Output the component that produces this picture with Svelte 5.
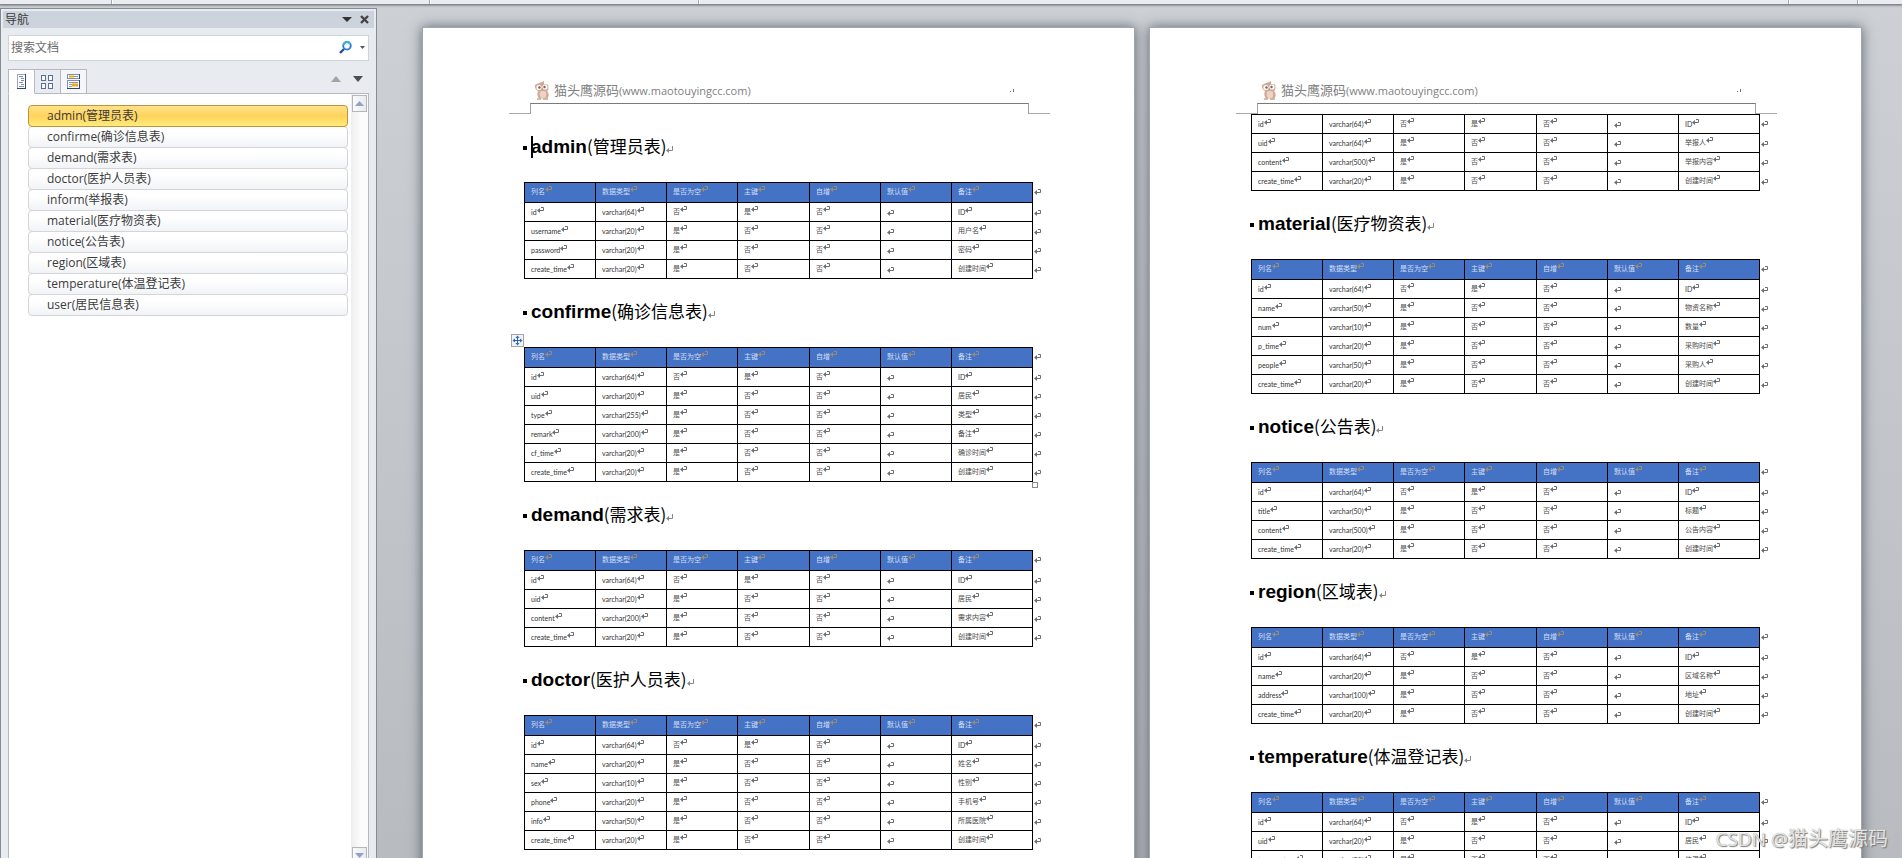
<script>
  const navItems = [
    'admin(管理员表)',
    'confirme(确诊信息表)',
    'demand(需求表)',
    'doctor(医护人员表)',
    'inform(举报表)',
    'material(医疗物资表)',
    'notice(公告表)',
    'region(区域表)',
    'temperature(体温登记表)',
    'user(居民信息表)'
  ];
  let selected = $state(0);
  let view = $state(0);
  let query = $state('');

  const columns = ['列名', '数据类型', '是否为空', '主键', '自增', '默认值', '备注'];

  // [name, length, remark]; the id column is always the primary key
  const pages = [
    [
      { name: 'admin', title: '管理员表', caret: true, rows: [['id', 64, 'ID'], ['username', 20, '用户名'], ['password', 20, '密码'], ['create_time', 20, '创建时间']] },
      { name: 'confirme', title: '确诊信息表', handles: true, rows: [['id', 64, 'ID'], ['uid', 20, '居民'], ['type', 255, '类型'], ['remark', 200, '备注'], ['cf_time', 20, '确诊时间'], ['create_time', 20, '创建时间']] },
      { name: 'demand', title: '需求表', rows: [['id', 64, 'ID'], ['uid', 20, '居民'], ['content', 200, '需求内容'], ['create_time', 20, '创建时间']] },
      { name: 'doctor', title: '医护人员表', rows: [['id', 64, 'ID'], ['name', 20, '姓名'], ['sex', 10, '性别'], ['phone', 20, '手机号'], ['info', 50, '所属医院'], ['create_time', 20, '创建时间']] }
    ],
    [
      { rows: [['id', 64, 'ID'], ['uid', 64, '举报人'], ['content', 500, '举报内容'], ['create_time', 20, '创建时间']] },
      { name: 'material', title: '医疗物资表', rows: [['id', 64, 'ID'], ['name', 50, '物资名称'], ['num', 10, '数量'], ['p_time', 20, '采购时间'], ['people', 50, '采购人'], ['create_time', 20, '创建时间']] },
      { name: 'notice', title: '公告表', rows: [['id', 64, 'ID'], ['title', 50, '标题'], ['content', 500, '公告内容'], ['create_time', 20, '创建时间']] },
      { name: 'region', title: '区域表', rows: [['id', 64, 'ID'], ['name', 20, '区域名称'], ['address', 100, '地址'], ['create_time', 20, '创建时间']] },
      { name: 'temperature', title: '体温登记表', rows: [['id', 64, 'ID'], ['uid', 20, '居民'], ['temperature', 20, '体温'], ['create_time', 20, '创建时间']] }
    ]
  ];

  const isLatin = (text) => /^[\x00-\x7f]+$/.test(text);

  function cells([name, length, remark]) {
    const key = name === 'id';
    return [name, `varchar(${length})`, key ? '否' : '是', key ? '是' : '否', '否', '', remark];
  }
</script>

{#snippet mark()}
  <svg class="mark" viewBox="0 0 7 6" width="7" height="6" aria-hidden="true">
    <path d="M4 .5H6.5V3.5H1" fill="none" stroke="currentColor" />
    <path d="M0 3.5L3 1V6Z" fill="currentColor" />
  </svg>
{/snippet}

<div class="app">
  <div class="ribbon" aria-hidden="true">
    <i></i><i></i><i></i><i></i><i></i>
  </div>

  <div class="main">
    <aside class="pane">
      <header class="pane-title">
        <span>导航</span>
        <button aria-label="任务窗格选项">
          <svg width="10" height="5" viewBox="0 0 10 5"><path d="M0 0H10L5 5Z" fill="#333" /></svg>
        </button>
        <button aria-label="关闭">
          <svg width="9" height="9" viewBox="0 0 9 9"><path d="M1 1L8 8M8 1L1 8" stroke="#444" stroke-width="2.4" /></svg>
        </button>
      </header>

      <div class="search">
        <input type="text" aria-label="搜索文档" placeholder="搜索文档" bind:value={query} />
        <button aria-label="搜索">
          <svg width="13" height="13" viewBox="0 0 13 13">
            <path d="M5 8L1 12" stroke="#2a4a9c" stroke-width="2.4" />
            <circle cx="8" cy="4.8" r="3.8" fill="#f2faff" stroke="#2b7cc9" stroke-width="1.8" />
            <path d="M4.3 4.2A3.8 3.8 0 0 1 11.4 3" fill="none" stroke="#3fb0de" stroke-width="1.8" />
          </svg>
        </button>
        <button class="more" aria-label="查找选项">
          <svg width="5" height="3" viewBox="0 0 5 3"><path d="M0 0H5L2.5 3Z" fill="#555" /></svg>
        </button>
      </div>

      <div class="tabs">
        <button class:active={view === 0} aria-label="浏览您的文档中的标题" onclick={() => (view = 0)}>
          <svg width="9" height="15" viewBox="0 0 9 15">
            <rect x=".5" y=".5" width="8" height="14" fill="#fff" stroke="#9aa7ba" />
            <path d="M8.5 0V15M0 14.5H9" stroke="#33476b" />
            <path d="M2 2.5H6M4 4.5H7M4 6.5H7M2 8.5H6M4 10.5H7M2 12.5H7" stroke="#7d8da6" />
          </svg>
        </button>
        <button class:active={view === 1} aria-label="浏览您的文档中的页面" onclick={() => (view = 1)}>
          <svg width="12" height="14" viewBox="0 0 12 14">
            <g fill="#f6f9fd" stroke="#5c6f93">
              <rect x=".5" y=".5" width="4" height="5" /><rect x="7.5" y=".5" width="4" height="5" />
              <rect x=".5" y="8.5" width="4" height="5" /><rect x="7.5" y="8.5" width="4" height="5" />
            </g>
          </svg>
        </button>
        <button class="light" class:active={view === 2} aria-label="浏览当前搜索的结果" onclick={() => (view = 2)}>
          <svg width="13" height="15" viewBox="0 0 13 15">
            <rect x=".5" y=".5" width="12" height="4" fill="#fff" stroke="#7f90ad" />
            <rect x=".5" y="6.5" width="12" height="8" fill="#fff" stroke="#7f90ad" />
            <path d="M12.5 0V5M12.5 6V15M0 14.5H13" stroke="#33476b" />
            <path d="M2 2.5H7M5 10.5H11M5 11.5H11" stroke="#f0a818" stroke-width="2" />
            <path d="M7 2.5H11M2 8.5H11M2 10.5H5M2 12.5H5" stroke="#8796b0" />
          </svg>
        </button>
        <span class="steps">
          <button aria-label="上一标题"><svg width="10" height="6" viewBox="0 0 10 6"><path d="M0 6H10L5 0Z" fill="#a3a3a3" /></svg></button>
          <button aria-label="下一标题"><svg width="10" height="6" viewBox="0 0 10 6"><path d="M0 0H10L5 6Z" fill="#4c4f54" /></svg></button>
        </span>
      </div>

      <div class="outline">
        <ul>
          {#each navItems as item, i}
            <li><button class:selected={selected === i} onclick={() => (selected = i)}>{item}</button></li>
          {/each}
        </ul>
        <div class="scrollbar">
          <button aria-label="向上滚动"><svg width="9" height="5" viewBox="0 0 9 5"><path d="M0 5H9L4.5 0Z" fill="#94a0cc" /></svg></button>
          <button aria-label="向下滚动"><svg width="9" height="5" viewBox="0 0 9 5"><path d="M0 0H9L4.5 5Z" fill="#94a0cc" /></svg></button>
        </div>
      </div>
    </aside>

    <main class="workspace">
      {#each pages as sections}
        <article class="page">
          <header class="page-head">
            <svg class="owl" width="16" height="19" viewBox="0 0 16 19" aria-hidden="true">
              <path d="M1 4L4 2.500L8 1L10 0L10 3L14 3.500C15 7 14.500 9 13 10C15.500 13 15 16 13 17.500H5C3 15 3 12 4 10C1.500 9 .5 6 1 4Z" fill="#d3a994" />
              <path d="M6 10.500C8 9.500 11 10 12 11C12.500 14 12 16 11 17H7C5.500 15 5.500 12 6 10.500Z" fill="#ecd3c5" />
              <circle cx="5" cy="6.500" r="2.600" fill="#fbfaf8" /><circle cx="11" cy="6" r="2.600" fill="#fbfaf8" />
              <circle cx="5.500" cy="6.500" r="1.200" fill="#6e6765" /><circle cx="10.500" cy="6" r="1.200" fill="#6e6765" />
              <path d="M7.500 7.500H9L8.200 9.500Z" fill="#c48d61" />
              <path d="M3 18H7M9 18H14" stroke="#c7a797" stroke-width="1.400" />
            </svg>
            <span class="site">猫头鹰源码<span class="url">(www.maotouyingcc.com)</span></span>
            <svg class="end" width="4" height="3" viewBox="0 0 4 3" aria-hidden="true"><path d="M0 2H1V3H0ZM3 0H4V3H3Z" fill="#777" /></svg>
          </header>
          <div class="margin" aria-hidden="true"><i></i><b></b><i></i></div>

          <div class="body">
            {#each sections as section}
              {#if section.name}
                <h2>
                  <span class="bullet"></span>
                  <strong>{#if section.caret}<span class="caret"></span>{/if}{section.name}</strong><span class="cn">({section.title})</span>
                  <svg class="para" width="7" height="7" viewBox="0 0 7 7" aria-hidden="true">
                    <path d="M6.500 0V4.500H1" fill="none" stroke="currentColor" /><path d="M0 4.500L3 2V7Z" fill="currentColor" />
                  </svg>
                </h2>
              {/if}
              <div class="sheet">
                <table>
                  <colgroup>
                    {#each columns as _}<col class="data" />{/each}
                    <col class="tail" />
                  </colgroup>
                  {#if section.name}
                    <thead>
                      <tr>
                        {#each columns as column}<th scope="col"><span>{column}</span>{@render mark()}</th>{/each}
                        <td class="rowend">{@render mark()}</td>
                      </tr>
                    </thead>
                  {/if}
                  <tbody>
                    {#each section.rows as row}
                      <tr>
                        {#each cells(row) as cell}
                          <td class:latin={isLatin(cell)} class:blank={!cell}>{#if cell}<span>{cell}</span>{/if}{@render mark()}</td>
                        {/each}
                        <td class="rowend">{@render mark()}</td>
                      </tr>
                    {/each}
                  </tbody>
                </table>
                {#if section.handles}
                  <svg class="move" width="13" height="13" viewBox="0 0 13 13" aria-hidden="true">
                    <rect x=".5" y=".5" width="12" height="12" fill="#f1f3f6" stroke="#a0a4a9" />
                    <path d="M6.500 3V10M3 6.500H10" stroke="#2f62bd" />
                    <path d="M6.500 1.500L8.500 4H4.500ZM6.500 11.500L8.500 9H4.500ZM1.500 6.500L4 4.500V8.500ZM11.500 6.500L9 4.500V8.500Z" fill="#2f62bd" />
                  </svg>
                  <span class="resize"></span>
                {/if}
              </div>
            {/each}
          </div>
        </article>
      {/each}
    </main>
  </div>

  <div class="watermark"><span>CSDN @</span>猫头鹰源码</div>
</div>

<style>
  :global(body) {
    margin: 0;
  }
  .app {
    position: relative;
    display: flex;
    flex-direction: column;
    height: 100vh;
    overflow: hidden;
    font-family: 'Open Sans', 'Noto Sans CJK SC', sans-serif;
    background: linear-gradient(#cdd1d6, #b8bcc1);
  }
  .app * {
    box-sizing: border-box;
  }
  button {
    display: flex;
    align-items: center;
    justify-content: center;
    padding: 0;
    border: 0;
    background: none;
    font: inherit;
    color: inherit;
  }
  svg {
    display: block;
    flex: none;
  }

  .ribbon {
    display: grid;
    grid-template-columns: 113px 318px 269px 1fr 69px 43px;
    flex: none;
    height: 5px;
    background: #e9edf2;
    border-bottom: 1px solid #85898e;
    box-shadow: 0 1px 2px #8f9399;
  }
  .ribbon i {
    border-right: 1px solid #fff;
    box-shadow: inset -1px 0 #a5a9af;
  }

  .main {
    display: flex;
    flex: 1;
    min-height: 0;
    padding-top: 3px;
  }

  .pane {
    display: flex;
    flex-direction: column;
    flex: none;
    width: 377px;
    padding: 2px 2px 0;
    border: 1px solid #878b92;
    border-bottom: 0;
    background: #e8ecf1;
    color: #3b3b3b;
    font-size: 12px;
  }
  .pane-title {
    display: flex;
    align-items: center;
    gap: 8px;
    height: 17px;
    padding: 0 5px 0 2px;
    background: #cdd3dc;
    line-height: 17px;
  }
  .pane-title span {
    flex: 1;
  }
  .search {
    display: flex;
    align-items: center;
    gap: 8px;
    height: 26px;
    margin: 7px 5px 0;
    padding: 0 3px 2px 0;
    border: 1px solid #d0d4d9;
    background: #fff;
  }
  .search input {
    flex: 1;
    min-width: 0;
    height: 22px;
    padding: 0 2px;
    border: 0;
    outline: 0;
    background: none;
    font: inherit;
  }
  .search input::placeholder {
    color: #6b6b6b;
    opacity: 1;
  }
  .tabs {
    display: flex;
    margin: 8px 5px 0;
  }
  .tabs > button {
    width: 26px;
    height: 25px;
    padding-right: 1px;
    border: 1px solid #b6bac0;
    border-width: 1px 1px 1px 0;
  }
  .tabs > button:first-child {
    width: 27px;
    padding-right: 0;
    border-left-width: 1px;
  }
  .tabs > .light {
    background: #f4f6f9;
  }
  .tabs > .active {
    background: #fff;
    border-bottom-color: #fff;
  }
  .steps {
    display: flex;
    flex: 1;
    align-items: center;
    justify-content: flex-end;
    gap: 12px;
    padding: 0 6px 4px 0;
    border-bottom: 1px solid #b6bac0;
  }
  .outline {
    display: flex;
    flex: 1;
    min-height: 0;
    margin: 0 5px;
    border: 1px solid #b6bac0;
    border-width: 0 1px;
    background: #fff;
  }
  ul {
    flex: 1;
    margin: 0;
    padding: 11px 3px 0 19px;
    list-style: none;
  }
  li {
    height: 21px;
  }
  li button {
    position: relative;
    justify-content: flex-start;
    width: 100%;
    height: 22px;
    padding-left: 18px;
    border: 1px solid #d3d5d8;
    border-radius: 4px;
    background: linear-gradient(#fff 30%, #f1f3f6);
    line-height: 20px;
  }
  li .selected {
    z-index: 1;
    border-color: #c2923a;
    background: linear-gradient(#ffe28a, #ffd35c 50%, #ffec7c);
  }
  .scrollbar {
    display: flex;
    flex-direction: column;
    justify-content: space-between;
    width: 17px;
    padding: 1px 1px 0;
    background: linear-gradient(90deg, #eee, #fcfcfc 60%);
  }
  .scrollbar button {
    width: 15px;
    height: 17px;
    border: 1px solid #b3b6bb;
    background: linear-gradient(90deg, #fafafa, #e9ebee);
  }
  .scrollbar button:last-child {
    height: 11px;
    padding-top: 4px;
    border-bottom: 0;
  }

  .workspace {
    display: grid;
    grid-template-columns: 1fr 1fr;
    flex: 1;
    gap: 14px;
    min-width: 0;
    padding: 19px 40px 0 45px;
  }
  .page {
    border: 1px solid #9fa6ae;
    border-bottom: 0;
    background: #fff;
    box-shadow: 0 0 12px rgba(50, 55, 65, 0.7);
  }
  .page-head {
    display: flex;
    align-items: center;
    height: 75px;
    padding: 53px 120px 3px 111px;
    color: #808080;
  }
  .site {
    flex: 1;
    margin-left: 4px;
    font-size: 13px;
    line-height: 18px;
    white-space: nowrap;
  }
  .url {
    font-size: 11px;
  }
  .margin {
    display: flex;
    height: 11px;
    padding: 0 84px 0 86px;
  }
  .margin i {
    width: 21px;
    border-bottom: 1px solid #a8a8a8;
  }
  .margin b {
    flex: 1;
    border: 1px solid #a0a0a0;
    border-top-color: #7a7a7a;
    border-bottom: 0;
  }
  .body {
    padding: 0 92px 0 101px;
  }

  h2 {
    display: flex;
    align-items: baseline;
    height: 68px;
    margin: 0;
    padding-top: 20px;
    color: #000;
    font: 400 17px/24px 'Liberation Sans', 'Noto Sans CJK SC', sans-serif;
    white-space: nowrap;
  }
  .bullet {
    align-self: flex-start;
    width: 4px;
    height: 4px;
    margin: 12px 4px 0 -1px;
    background: #000;
  }
  h2 strong {
    position: relative;
    font-size: 19px;
  }
  .cn {
    font-family: 'Noto Sans CJK SC', sans-serif;
    line-height: 24px;
  }
  .caret {
    position: absolute;
    top: 1px;
    left: 0;
    width: 2px;
    height: 22px;
    background: #000;
  }
  .para {
    color: #888;
  }

  .sheet {
    position: relative;
  }
  table {
    width: 100%;
    border-collapse: separate;
    border-spacing: 0;
    table-layout: fixed;
    color: #4a4a4a;
    font-size: 7px;
    line-height: 8px;
  }
  .data {
    width: 71px;
  }
  .data:nth-child(4) {
    width: 72px;
  }
  .data:nth-child(7) {
    width: auto;
  }
  .data:first-child {
    width: 72px;
  }
  .tail {
    width: 9px;
  }
  th,
  td {
    height: 19px;
    padding: 0 0 0 6px;
    border: 1px solid #000;
    border-width: 0 1px 1px 0;
    font-weight: 400;
    text-align: left;
    vertical-align: top;
    white-space: nowrap;
  }
  tr > :first-child {
    border-left-width: 1px;
  }
  th {
    height: 21px;
    border-top-width: 1px;
    background: #4472c4;
    color: #d3dff4;
  }
  tbody:nth-child(2) > tr:first-child > td:not(.rowend) {
    height: 20px;
    border-top-width: 1px;
  }
  th span,
  td span,
  .mark {
    display: inline-block;
    vertical-align: top;
  }
  th span,
  td span {
    padding-top: 5px;
  }
  .mark {
    margin-top: 3px;
    color: #6e6e6e;
  }
  th .mark {
    color: #9c8c70;
  }
  .latin {
    color: #333;
    font-family: Lato, sans-serif;
  }
  .latin span {
    padding-top: 5px;
  }
  .latin .mark {
    margin-top: 4px;
  }
  .blank .mark,
  .rowend .mark {
    margin-top: 7px;
  }
  .rowend {
    padding-left: 1px;
    border: 0;
  }
  .move {
    position: absolute;
    top: -13px;
    left: -13px;
  }
  .resize {
    position: absolute;
    right: 4px;
    bottom: -6px;
    width: 6px;
    height: 6px;
    border: 1px solid #8a8a8a;
    background: #fff;
  }

  .watermark {
    position: absolute;
    right: 14px;
    bottom: 4px;
    color: rgba(240, 240, 240, 0.9);
    font-size: 20px;
    line-height: 30px;
    text-shadow: 1px 1px 1px #777, 0 0 1px #999;
  }
  .watermark span {
    font-size: 19px;
  }
</style>
